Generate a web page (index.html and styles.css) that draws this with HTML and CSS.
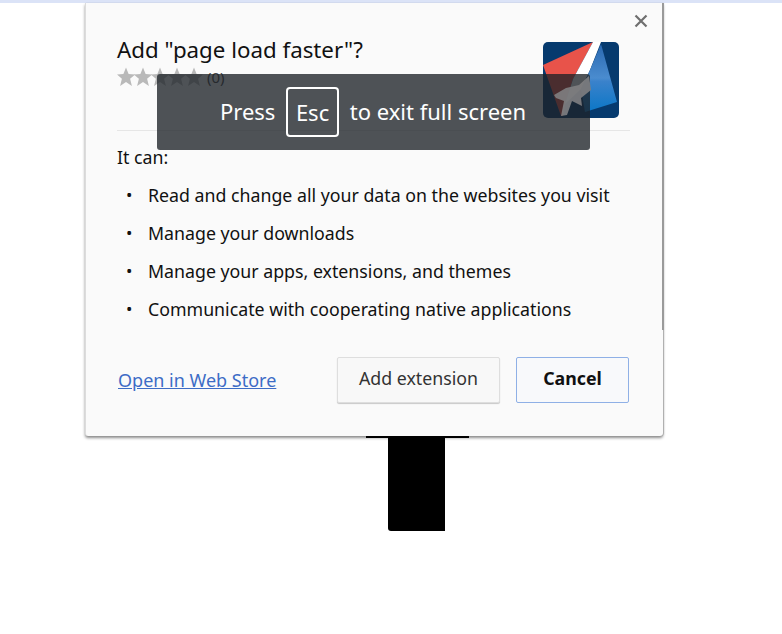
FILE: index.html
```html
<!DOCTYPE html>
<html>
  <head>
    <meta charset="utf-8">
    <title>Add extension</title>
    <link rel="stylesheet" href="styles.css">
  </head>
  <body>
    <div class="topbar"></div>

    <div class="dialog">
      <div class="close">
        <svg width="14" height="14" viewBox="0 0 14 14"><path d="M1.5 1.5L12.5 12.5M12.5 1.5L1.5 12.5" stroke="#6f6f6f" stroke-width="2.2" fill="none"/></svg>
      </div>

      <div class="head">
        <div class="head_text">
          <div class="title">Add "page load faster"?</div>
          <div class="rating">
            <svg class="stars" width="86" height="20" viewBox="0 0 86 20">
              <defs><path id="star" d="M9 0.5L11.6 7L18.2 7.4L13.1 11.8L14.9 19L9 15L3.1 19L4.9 11.8L-0.2 7.4L6.4 7Z"/></defs>
              <use href="#star" x="0"/>
              <use href="#star" x="17"/>
              <use href="#star" x="34"/>
              <use href="#star" x="51"/>
              <use href="#star" x="68"/>
            </svg>
            <span class="count">(0)</span>
          </div>
        </div>
        <svg class="logo" width="76" height="76" viewBox="0 0 76 76">
          <defs>
            <linearGradient id="blue" x1="0" y1="0" x2="0" y2="1">
              <stop offset="0" stop-color="#2a68b0"/>
              <stop offset="0.5" stop-color="#4a8ccf"/>
              <stop offset="0.55" stop-color="#3a82cb"/>
              <stop offset="1" stop-color="#0b77c7"/>
            </linearGradient>
            <clipPath id="round"><rect width="76" height="76" rx="5"/></clipPath>
          </defs>
          <g clip-path="url(#round)">
            <rect width="76" height="76" fill="#063a6e"/>
            <path d="M0 23L50 0L30 37L22 62L20 74L18 74Z" fill="#e8534a"/>
            <path d="M50 0L58 0L47 28L38 47L22 62L30 37Z" fill="#fff"/>
            <path d="M58 2L74 60L42 70L38 47L47 28Z" fill="url(#blue)"/>
          </g>
        </svg>
      </div>

      <hr class="rule">

      <div class="perms">
        <div class="can">It can:</div>
        <ul class="perm_list">
          <li>Read and change all your data on the websites you visit</li>
          <li>Manage your downloads</li>
          <li>Manage your apps, extensions, and themes</li>
          <li>Communicate with cooperating native applications</li>
        </ul>
      </div>

      <div class="foot">
        <a class="store" href="#">Open in Web Store</a>
        <div class="buttons">
          <button class="btn">Add extension</button>
          <button class="btn btn_focus">Cancel</button>
        </div>
      </div>
    </div>

    <div class="stem"></div>
    <div class="post"></div>

    <div class="toast">
      <span>Press</span>
      <span class="key">Esc</span>
      <span>to exit full screen</span>
      <svg class="plane" width="40" height="42" viewBox="0 0 40 42">
        <path d="M1 20L13 13L26 10L36 1L38 15L28 23L29 31L19 26L14 40L8 41L11 26L3 23Z" fill="#7f8082" fill-opacity="0.9"/>
      </svg>
    </div>
  </body>
</html>
```

FILE: styles.css
```css
html, body { margin: 0; height: 100%; overflow: hidden }
body { background: #fff; font-family: "Noto Sans", "Open Sans", sans-serif; color: #111; position: relative }

.topbar { height: 3px; background: #dbe3f7 }

.dialog { position: relative; box-sizing: border-box; width: 578px; height: 433px; margin-left: 85px; padding: 0 33px 0 31px; background: #fafafa; border-radius: 0 0 3px 3px; border-left: 1px solid #dcdcdc; box-shadow: 0 2px 3px rgba(0,0,0,0.45), 1px 0 1px rgba(0,0,0,0.2) }
.dialog::after { content: ""; position: absolute; right: -1px; top: 0; width: 2px; height: 327px; background: #9a9a9a }

.close { position: absolute; top: 8px; right: 15px; height: 14px }

.head { display: flex; justify-content: space-between; padding-top: 32px; height: 94px; box-sizing: border-box; padding-right: 11px }
.title { font-size: 22.3px; line-height: 30px; color: #111 }
.rating { display: flex; align-items: center; gap: 4px; height: 23px }
.stars { display: block; fill: #b9b9b9 }
.count { font-size: 15px; color: #444 }
.logo { margin-top: 7px; display: block }

.rule { margin: 33px 0 0; border: 0; border-top: 1px solid #e6e6e6 }

.perms { font-size: 17.75px; padding-top: 13px }
.can { line-height: 26px }
.perm_list { list-style: none; margin: 6px 0 0; padding: 0 }
.perm_list li { position: relative; padding-left: 31px; height: 38px; line-height: 38px; white-space: nowrap; color: #111 }
.perm_list li::before { content: "•"; position: absolute; left: 9px; font-size: 17px }

.foot { display: flex; justify-content: space-between; align-items: center; margin-top: 29px; padding-right: 1px }
.store { color: #3d6cc6; font-size: 18px; margin-left: 1px }
.buttons { display: flex; gap: 16px }
.btn { box-sizing: border-box; height: 46px; width: 163px; font: 17.75px "Noto Sans", "Open Sans", sans-serif; color: #333; background: #f8f8f8; border: 1px solid #dedede; border-radius: 2px; box-shadow: 0 1px 1px rgba(0,0,0,0.2); padding: 0 0 4px }
.btn_focus { width: 113px; font-weight: bold; color: #111; background: #f8f9fb; border-color: #8fb0e6; box-shadow: none }

.stem { width: 103px; height: 2px; margin-left: 366px; background: #000 }
.post { width: 57px; height: 93px; margin-left: 388px; background: #000; border-radius: 0 0 0 3px }

.toast { position: absolute; left: 157px; top: 74px; width: 433px; height: 76px; box-sizing: border-box; padding: 0 1px 2px 0; display: flex; align-items: center; justify-content: center; gap: 11px; background: rgba(30,34,40,0.78); border-radius: 3px; color: #fff; font-size: 22px }
.key { border: 2px solid #fff; border-radius: 4px; height: 46px; line-height: 46px; padding: 0 7.5px; margin-top: 2px }
.plane { position: absolute; left: 396px; top: 1px }
```
